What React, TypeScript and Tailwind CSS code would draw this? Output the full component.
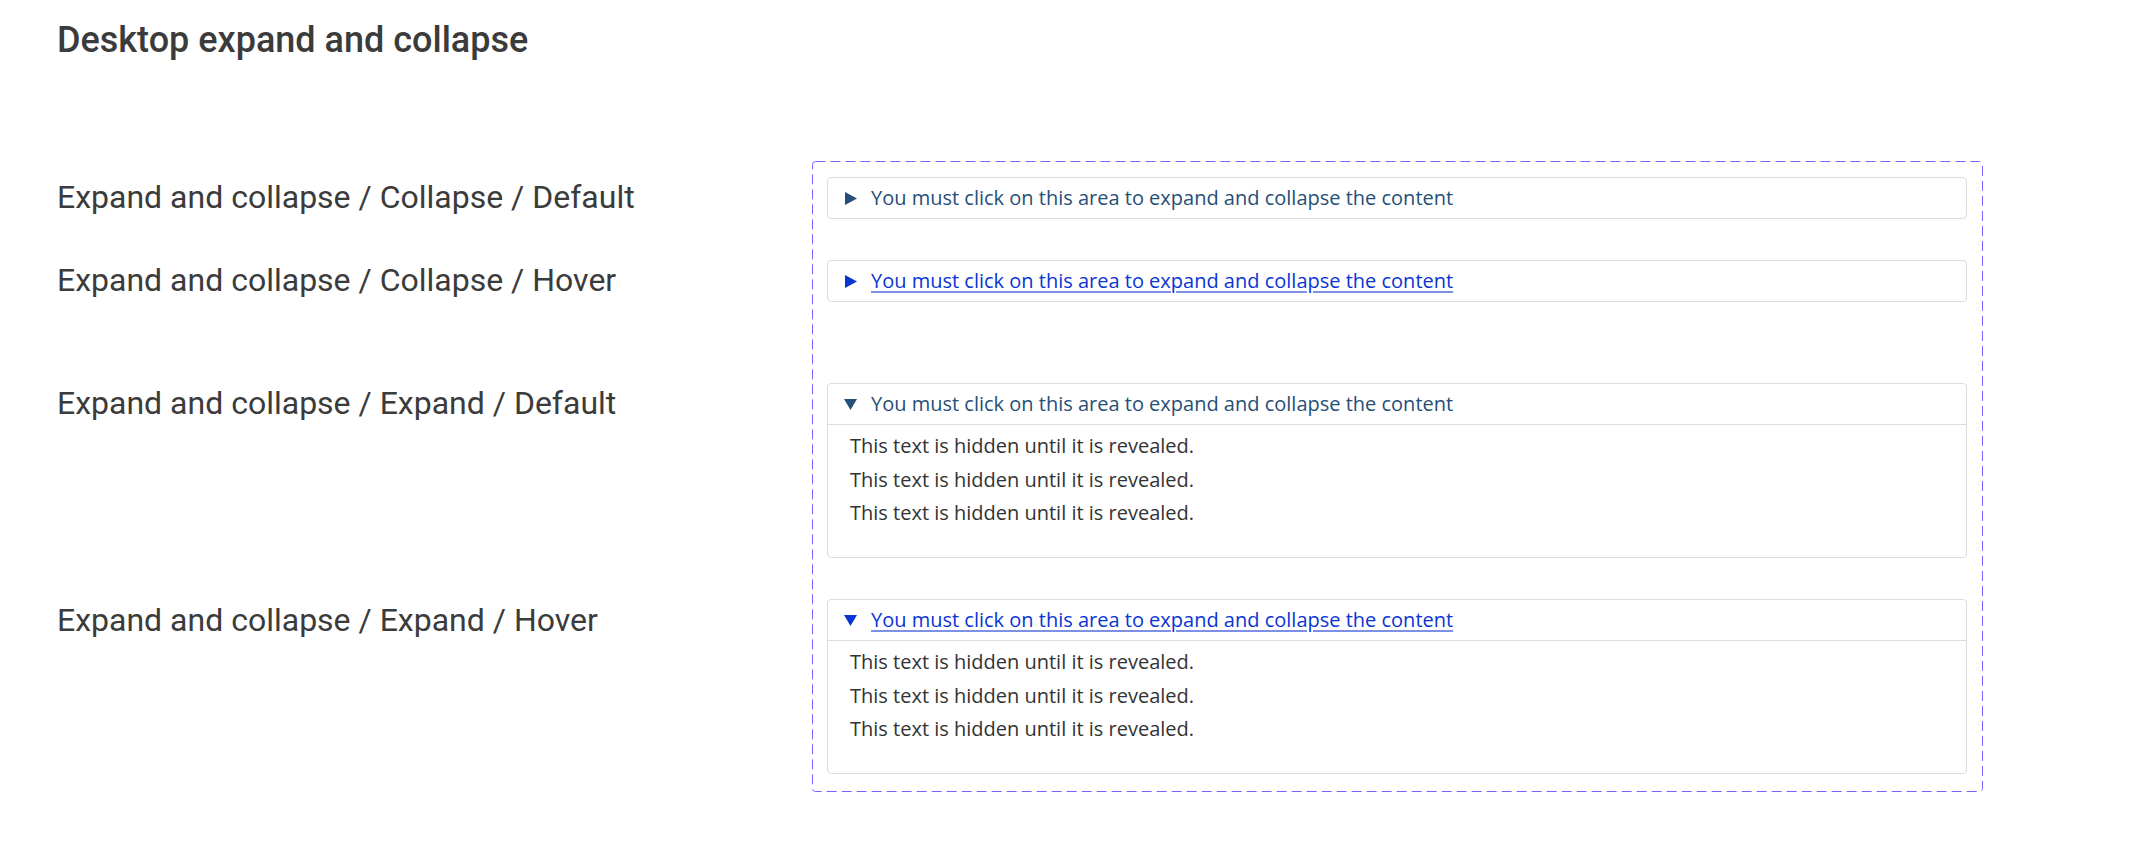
import React from 'react';

interface ExpanderProps {
  expanded: boolean;
  hover: boolean;
}

const Triangle = ({ expanded, color }: { expanded: boolean; color: string }) => (
  <svg width="13" height="13" viewBox="0 0 13 13" className="shrink-0">
    {expanded ? (
      <polygon points="0,1 13,1 6.5,12" fill={color} />
    ) : (
      <polygon points="1,0 13,6.5 1,13" fill={color} />
    )}
  </svg>
);

const Expander = ({ expanded, hover }: ExpanderProps) => {
  return (
    <div className="border border-[#dcdcdc] rounded-[4px] bg-white">
      <div
        className={
          expanded
            ? 'h-[41px] flex items-center pl-[16px] pr-[14px] gap-[14px] border-b border-[#dcdcdc]'
            : 'h-[40px] flex items-center pl-[16px] pr-[14px] gap-[14px]'
        }
      >
        <Triangle expanded={expanded} color={hover ? '#0a35d5' : '#264f77'} />
        <span
          className={
            hover
              ? "font-['Open_Sans',sans-serif] text-[20px] leading-[28px] text-[#0a35d5] underline decoration-[#7d90e6] underline-offset-[3px]"
              : "font-['Open_Sans',sans-serif] text-[20px] leading-[28px] text-[#264f77]"
          }
        >
          You must click on this area to expand and collapse the content
        </span>
      </div>
      {expanded && (
        <div className="h-[132px] pl-[22px] pt-[4px] font-['Open_Sans',sans-serif] text-[20px] leading-[33.5px] text-[#333333]">
          <p>This text is hidden until it is revealed.</p>
          <p>This text is hidden until it is revealed.</p>
          <p>This text is hidden until it is revealed.</p>
        </div>
      )}
    </div>
  );
};

const Label = ({ children, className }: { children: React.ReactNode; className?: string }) => (
  <div className={`h-[42px] flex items-center text-[32px] leading-[40px] text-[#3b3b3b] whitespace-nowrap ${className ?? ''}`}>
    {children}
  </div>
);

export default function App() {
  return (
    <div className="min-h-screen bg-white font-['Roboto',sans-serif]">
      <h1 className="pl-[57px] pt-[20px] text-[36px] leading-[40px] font-medium text-[#3b3b3b]">
        Desktop expand and collapse
      </h1>

      <div className="flex pl-[57px] mt-[101px]">
        {/* labels */}
        <div className="w-[755px] flex flex-col pt-[15px]">
          <Label>Expand and collapse / Collapse / Default</Label>
          <Label className="mt-[41px]">Expand and collapse / Collapse / Hover</Label>
          <Label className="mt-[81px]">Expand and collapse / Expand / Default</Label>
          <Label className="mt-[175px]">Expand and collapse / Expand / Hover</Label>
        </div>

        {/* component set */}
        <div className="relative w-[1171px] h-[631px] pl-[15px] pr-[16px] pt-[16px] flex flex-col">
          <svg className="absolute inset-0 pointer-events-none" width="1171" height="631">
            <rect
              x="0.5"
              y="0.5"
              width="1170"
              height="630"
              rx="3"
              fill="none"
              stroke="#7b61ff"
              strokeWidth="1"
              strokeDasharray="10 5"
            />
          </svg>
          <Expander expanded={false} hover={false} />
          <div className="mt-[41px]">
            <Expander expanded={false} hover={true} />
          </div>
          <div className="mt-[81px]">
            <Expander expanded={true} hover={false} />
          </div>
          <div className="mt-[41px]">
            <Expander expanded={true} hover={true} />
          </div>
        </div>
      </div>
    </div>
  );
}
